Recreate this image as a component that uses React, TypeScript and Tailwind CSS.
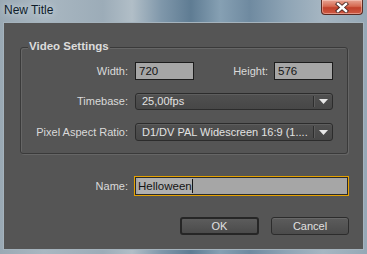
import React from "react";

function Arrow() {
  return (
    <svg width="9" height="5" viewBox="0 0 9 5" className="block">
      <path d="M0 0 L9 0 L4.5 5 Z" fill="#e8e8e8" />
    </svg>
  );
}

function Dropdown({ text }: { text: string }) {
  return (
    <div className="ml-[7px] w-[198px] h-full flex rounded-[3px] border border-[#2c2c2c] bg-[linear-gradient(180deg,#505050_0%,#474747_100%)] shadow-[inset_0_1px_0_#5e5e5e]">
      <div className="flex-1 pl-[6px] flex items-center text-[11px] text-[#e2e2e2] whitespace-nowrap overflow-hidden">{text}</div>
      <div className="w-[1px] my-[2px] bg-[#2e2e2e]" />
      <div className="w-[1px] my-[2px] bg-[#5c5c5c]" />
      <div className="w-[17px] flex items-center justify-center">
        <Arrow />
      </div>
    </div>
  );
}

export default function App() {
  return (
    <div className="w-[367px] h-[254px] flex flex-col overflow-hidden font-['Liberation_Sans',Arial,sans-serif] bg-[linear-gradient(90deg,#9aa9b4_0%,#a9b7c1_12%,#9cacb8_28%,#b1bec7_36%,#7f97aa_44%,#5f7c93_52%,#86a0b3_60%,#6f8aa0_68%,#8ea4b5_78%,#a6b6c2_88%,#95a8b6_100%)]">
      <div className="h-[22px] flex items-start justify-between pl-[4px] pr-[4px]">
        <span className="text-[12px] leading-[20px] text-[#0e1c2a] [text-shadow:0_0_6px_#dde6ee]">New Title</span>
        <div className="w-[42px] h-[15px] rounded-b-[4px] border border-t-0 border-[#5a2a22] bg-[linear-gradient(180deg,#e7a493_0%,#d66a52_45%,#c1412b_55%,#cf5a44_100%)] shadow-[inset_0_0_0_1px_rgba(255,220,210,0.45)] flex items-center justify-center">
          <svg width="14" height="11" viewBox="0 0 14 11">
            <path d="M3 2 L11 9 M11 2 L3 9" stroke="#4a2a26" strokeWidth="4.2" strokeLinecap="square" />
            <path d="M3 2 L11 9 M11 2 L3 9" stroke="#ffffff" strokeWidth="2.4" strokeLinecap="square" />
          </svg>
        </div>
      </div>
      <div className="mx-[3px] h-[228px] bg-[#555555] border border-[#a5b3bd] flex flex-col text-[#dadada]">
        <div className="relative ml-[16px] mt-[24px] w-[328px] h-[107px] border border-[#3a3a3a] rounded-[3px] shadow-[inset_1px_1px_0_#666666,1px_1px_0_#666666] pt-[14px]">
          <div className="absolute left-[7px] top-[-9px] px-[1px] bg-[#555555] font-bold text-[11.5px] leading-[14px] text-[#dcdcdc]">Video Settings</div>
          <div className="flex h-[18px] items-center">
            <div className="w-[107px] text-right text-[11px]">Width:</div>
            <div className="ml-[7px] w-[59px] h-full border border-[#1c1c1c] bg-[#a6a6a6] text-[#141414] text-[11.5px] leading-[16px] pl-[3px]">720</div>
            <div className="w-[74px] text-right text-[11px]">Height:</div>
            <div className="ml-[6px] w-[59px] h-full border border-[#1c1c1c] bg-[#a6a6a6] text-[#141414] text-[11.5px] leading-[16px] pl-[3px]">576</div>
          </div>
          <div className="flex h-[17px] mt-[13px] items-center">
            <div className="w-[107px] text-right text-[11px]">Timebase:</div>
            <Dropdown text="25,00fps" />
          </div>
          <div className="flex h-[18px] mt-[13px] items-center">
            <div className="w-[107px] text-right text-[11px]">Pixel Aspect Ratio:</div>
            <Dropdown text="D1/DV PAL Widescreen 16:9 (1...." />
          </div>
        </div>
        <div className="flex h-[20px] mt-[22px] ml-[17px] items-center">
          <div className="w-[107px] text-right text-[11px]">Name:</div>
          <div className="ml-[6px] w-[215px] h-full border border-[#e6a200] p-0">
            <div className="w-full h-full border border-[#2a2a2a] bg-[#a6a6a6] flex items-center pl-[2px]">
              <span className="bg-[#b0b0b0] text-[#141414] text-[11.5px] leading-[16px]">Helloween</span>
              <span className="w-[1px] h-[14px] bg-[#141414]" />
            </div>
          </div>
        </div>
        <div className="flex justify-end gap-[12px] mt-[21px] pr-[14px]">
          <div className="w-[79px] h-[18px] rounded-[3px] border-2 border-[#262626] bg-[linear-gradient(180deg,#5c5c5c_0%,#4b4b4b_100%)] flex items-center justify-center text-[11px] text-[#e0e0e0]">OK</div>
          <div className="w-[78px] h-[18px] rounded-[3px] border border-[#2c2c2c] bg-[linear-gradient(180deg,#5c5c5c_0%,#4b4b4b_100%)] shadow-[inset_0_1px_0_#686868] flex items-center justify-center text-[11px] text-[#e0e0e0]">Cancel</div>
        </div>
      </div>
    </div>
  );
}
